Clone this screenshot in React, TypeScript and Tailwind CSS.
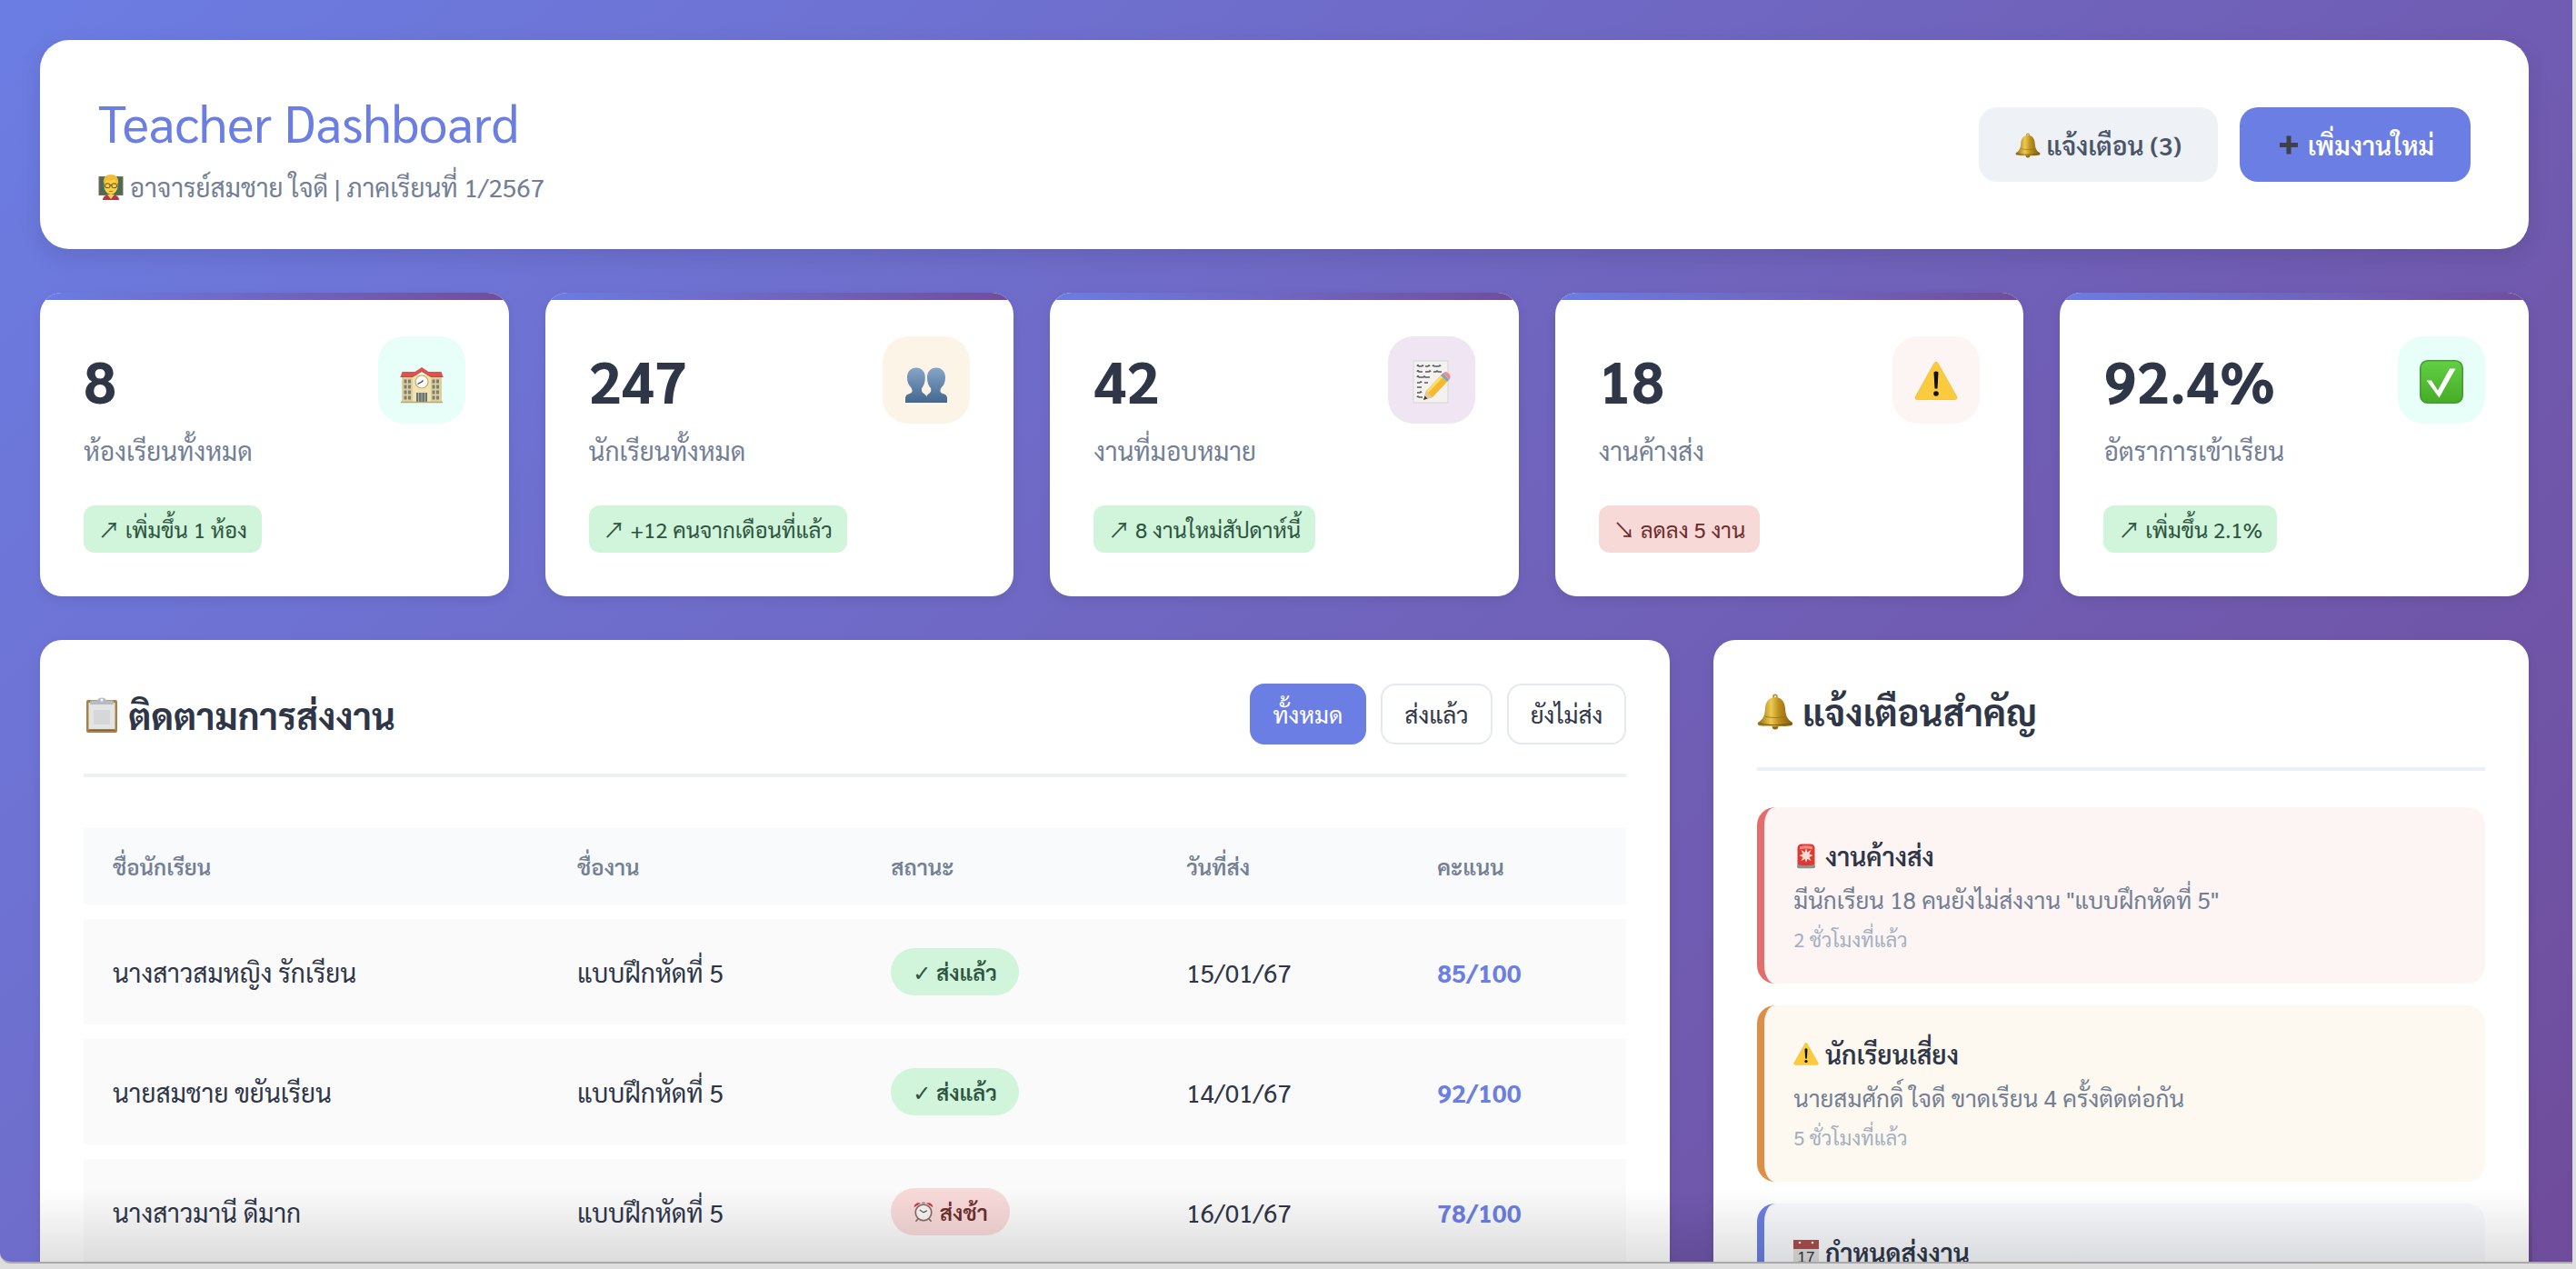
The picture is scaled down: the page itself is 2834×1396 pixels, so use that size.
import { useState, type ReactNode } from "react";

type Tone = "up" | "down";

interface IconProps {
  className?: string;
}

interface Stat {
  value: string;
  label: string;
  trend: string;
  tone: Tone;
  iconBg: string;
  icon: ReactNode;
}

interface Submission {
  student: string;
  task: string;
  late: boolean;
  date: string;
  score: string;
}

interface Alert {
  title: string;
  text: string;
  time: string;
  style: string;
  icon: ReactNode;
}

const inlineIcon = "inline-block size-[1em] align-[-0.1em]";
const bigIcon = "size-12";

function TeacherIcon({ className }: IconProps) {
  return (
    <svg viewBox="0 0 28 28" className={className} aria-hidden="true">
      <rect x="0.5" y="2" width="27" height="21" fill="#8a6a45" />
      <rect x="1.5" y="3" width="25" height="19" fill="#4a6b58" />
      <path d="M5 28c0-4 4-6 9-6s9 2 9 6z" fill="#b5364f" />
      <path d="M10 22l4 5 4-5z" fill="#f7d24b" />
      <ellipse cx="14" cy="12" rx="7.6" ry="10" fill="#fbd03f" />
      <path d="M6 10c-1-7 3-10 8-10s9 3 8 10c-2-1-3-3-4-5-3 2-8 2-10 1-1 1-1 3-2 4z" fill="#f1bd38" />
      <g fill="none" stroke="#5b4526" strokeWidth="1">
        <rect x="7.6" y="10" width="5.4" height="4.6" rx="1.6" />
        <rect x="15" y="10" width="5.4" height="4.6" rx="1.6" />
        <path d="M13 11.5h2" />
      </g>
      <path d="M11.4 18.2q2.6 1.8 5.2 0z" fill="#b8472f" />
    </svg>
  );
}

function BellIcon({ className }: IconProps) {
  return (
    <svg viewBox="0 0 40 40" className={className} aria-hidden="true">
      <defs>
        <linearGradient id="bell" x1="0" x2="1">
          <stop offset="0" stopColor="#8f6a10" />
          <stop offset="0.38" stopColor="#eccb52" />
          <stop offset="0.6" stopColor="#bd8f1c" />
          <stop offset="1" stopColor="#7d5b12" />
        </linearGradient>
      </defs>
      <circle cx="20" cy="3.4" r="2" fill="none" stroke="#b98b1e" strokeWidth="1.6" />
      <circle cx="20" cy="36" r="3.4" fill="#8d6315" />
      <path
        d="M20 4c-7.5 0-10.5 6-11 12-.5 8-2 12-7.5 15.5-1 .8-1 3 .5 3.500 5 1.600 31 1.600 36 0 1.500-.5 1.500-2.700.5-3.500-5.500-3.500-7-7.500-7.500-15.500-.5-6-3.500-12-11-12z"
        fill="url(#bell)"
      />
      <path d="M3 33c8 2 26 2 34 0" fill="none" stroke="#7c570d" strokeWidth="1.2" />
      <path d="M8.5 25c7 2 16 2 23 0" fill="none" stroke="#96700f" strokeWidth="0.8" />
    </svg>
  );
}

function PlusIcon({ className }: IconProps) {
  return (
    <svg viewBox="0 0 28 28" className={className} aria-hidden="true">
      <path d="M14 3.5v20M4 13.5h20" stroke="#3e4149" strokeWidth="5" />
    </svg>
  );
}

function SchoolIcon({ className }: IconProps) {
  const windows = [4.5, 9, 35.5, 40];
  const floors = [21.5, 27.5, 33.5, 39.5];
  return (
    <svg viewBox="0 0 48 48" className={className} aria-hidden="true">
      <path d="M2 18h44v29H2z" fill="#dccf9c" />
      <path d="M14 16h20v31H14z" fill="#efe3b4" />
      <path d="M2.5 13h14L24 8l7.5 5h14l2 5.5H34l-10-6-10 6H.5z" fill="#e0524c" />
      <path d="M.5 18.5H14l10-6 10 6h13.5" fill="none" stroke="#b73a38" strokeWidth="0.8" />
      {floors.map((y) =>
        windows.map((x) => <rect key={`${x}-${y}`} x={x} y={y} width="3" height="4" fill="#7d7e78" />)
      )}
      <circle cx="24" cy="24" r="7" fill="#fff" stroke="#c9a95a" strokeWidth="1.2" />
      <path d="M24 24l-4.5 2.500M24 24l1.500-1.500" stroke="#33386e" strokeWidth="1.3" />
      <path d="M18 36h12v11H18z" fill="#6c7470" />
      <path d="M24 36v11M20.5 36v11M27.5 36v11" stroke="#c8c8b8" strokeWidth="0.8" />
      <path d="M1 46.5h46" stroke="#b9a970" strokeWidth="1.4" />
    </svg>
  );
}

function PeopleIcon({ className }: IconProps) {
  return (
    <svg viewBox="0 0 48 48" className={className} aria-hidden="true">
      <defs>
        <linearGradient id="people" x1="0" x2="0" y1="0" y2="1">
          <stop offset="0" stopColor="#86a5c8" />
          <stop offset="1" stopColor="#44678f" />
        </linearGradient>
      </defs>
      <g fill="url(#people)">
        <path d="M13 8.5c5.800 0 9.800 4 9.800 11 0 5-1.600 9-3.600 11.500-.7 2.500.2 4.500 1.600 5.500 2.200 1.500 3.700 2.500 3.700 5v5.500H1V42c0-3 2-4.200 6-5.500 2-1 2-3.500.5-6C4.500 28 3 24 3 19.500c0-7 4-11 10-11z" />
        <path d="M35 8.500c6 0 10 4 10 11 0 4.500-1.500 8.500-4.500 11-1.500 2.500-1.500 5 .5 6 4 1.300 6 2.500 6 5.500v5H24V42c0-3 1.500-4 3.700-5.500 1.400-1 2-3 1.300-5.500-2.500-2.500-4-6.500-4-11.500 0-7 4-11 10-11z" />
      </g>
    </svg>
  );
}

function MemoIcon({ className }: IconProps) {
  return (
    <svg viewBox="0 0 48 48" className={className} aria-hidden="true">
      <path d="M4 1h38v46H4z" fill="#f3f2f0" stroke="#d8d5d2" strokeWidth="1" />
      <path
        d="M8 7q1-3 2 0h3q1-2 2 0M17 7h3q1-2 2 0M25 7q1-2 2 0h5q1-2 2 0M8 13q1-3 2 0h4M17 13h4q1-2 2 0M26 13h3q1-2 2 0h4M8 19q1-3 2 0h5q1-2 2 0h5M8 25h3q1-2 2 0M16 25h4M8 30h5M8 36h3q1-2 2 0M8 41q1-2 2 0h4"
        fill="none"
        stroke="#5b5a60"
        strokeWidth="1.4"
      />
      <path d="M15 44l3-10L34 17l7 7-16 17z" fill="#f4b92d" />
      <path d="M18 34L34 17l2.3 2.300-16 17z" fill="#fbdc6c" />
      <path d="M15 44l3-10 7 7z" fill="#e5c898" />
      <path d="M15 44l1.5-4.500 3 3z" fill="#3d3a38" />
      <path d="M34 17l2.5-2.500 7 7L41 24z" fill="#7fa5b4" />
      <path d="M36.5 14.500c2-2 4-2 6 0s3 4 1 7z" fill="#ee8e94" />
    </svg>
  );
}

function WarningIcon({ className }: IconProps) {
  return (
    <svg viewBox="0 0 48 48" className={className} aria-hidden="true">
      <path
        d="M22 3.5q2-3 4 0L46.5 40q1.800 3.500-2.500 3.500H4q-4.300 0-2.500-3.500z"
        fill="#fbcb3f"
        stroke="#f0bb38"
        strokeWidth="0.8"
      />
      <path d="M21.5 13.5q2.500-2 5 0L25.500 31.500h-3z" fill="#111" />
      <circle cx="24" cy="37" r="2.8" fill="#111" />
    </svg>
  );
}

function CheckIcon({ className }: IconProps) {
  return (
    <svg viewBox="0 0 48 48" className={className} aria-hidden="true">
      <defs>
        <linearGradient id="check" x1="0" x2="0" y1="0" y2="1">
          <stop offset="0" stopColor="#62cf45" />
          <stop offset="1" stopColor="#46ac25" />
        </linearGradient>
      </defs>
      <rect x="0.8" y="0.8" width="46.4" height="46.4" rx="8" fill="url(#check)" stroke="#479a37" strokeWidth="1.6" />
      <path d="M7.5 22.500h5.500l7 11L33 9.500h6.500L21.500 41.500z" fill="#fff" />
    </svg>
  );
}

function ClipboardIcon({ className }: IconProps) {
  return (
    <svg viewBox="0 0 40 40" className={className} aria-hidden="true">
      <rect x="3" y="3" width="34" height="36" rx="2" fill="#a98148" />
      <path d="M5.5 6h29v30h-29z" fill="#e4e4e5" />
      <path d="M11 14h18v16H11z" fill="#d6d7d9" />
      <path d="M5.5 36h29" stroke="#7b5a2c" strokeWidth="1.5" />
      <path d="M7 5.5q0-2 2-2h6q1-3 5-3t5 3h6q2 0 2 2V8H7z" fill="#b4bcc2" />
      <circle cx="20" cy="3" r="1.5" fill="#fff" />
    </svg>
  );
}

function SirenIcon({ className }: IconProps) {
  return (
    <svg viewBox="0 0 28 28" className={className} aria-hidden="true">
      <rect x="4" y="22.5" width="20" height="4.8" rx="2" fill="#8f9490" />
      <path d="M4.5 23V5q0-4.500 5-4.500h9q5 0 5 4.500v18q-9.500 2.500-19 0z" fill="#dc3b34" />
      <path d="M7 3.5q7-2.500 14 0v3q-7-2-14 0z" fill="#f18a80" />
      <path d="M14 5l1.3 4.500L19.500 7l-2 4.500 4 1.500-4 2 2 4-4.200-2L14 21l-1.300-4-4.200 2 2-4-4-2 4-1.500-2-4.500 4.200 2.500z" fill="#ffd9d4" />
    </svg>
  );
}

function ClockIcon({ className }: IconProps) {
  return (
    <svg viewBox="0 0 28 28" className={className} aria-hidden="true">
      <path d="M7 23l-3 3.5M21 23l3 3.5" stroke="#777" strokeWidth="2" />
      <path d="M2 8.5C2 4 6 1.5 10.5 3zM26 8.5C26 4 22 1.5 17.5 3z" fill="#c63a37" />
      <path d="M12 2.5h4" stroke="#888" strokeWidth="1.5" />
      <circle cx="14" cy="15" r="10.3" fill="#f6f4f2" stroke="#8c6a68" strokeWidth="2" />
      <path d="M14 15l-5-3.5M14 15l4.5-2.5" stroke="#444" strokeWidth="1.3" />
    </svg>
  );
}

function CalendarIcon({ className }: IconProps) {
  return (
    <svg viewBox="0 0 28 28" className={className} aria-hidden="true">
      <path d="M0 0h28v28H0z" fill="#dedede" />
      <path d="M0 0h28v10H0z" fill="#a94f4c" />
      <circle cx="7" cy="3" r="1.3" fill="#eee" />
      <circle cx="21" cy="3" r="1.3" fill="#eee" />
      <text x="14" y="25" fontSize="17" textAnchor="middle" fill="#333" className="font-['Liberation_Sans',sans-serif] font-normal">
        17
      </text>
    </svg>
  );
}

const stats: Stat[] = [
  { value: "8", label: "ห้องเรียนทั้งหมด", trend: "เพิ่มขึ้น 1 ห้อง", tone: "up", iconBg: "bg-[#e8fef9]", icon: <SchoolIcon className={bigIcon} /> },
  { value: "247", label: "นักเรียนทั้งหมด", trend: "+12 คนจากเดือนที่แล้ว", tone: "up", iconBg: "bg-[#fdf4e8]", icon: <PeopleIcon className={bigIcon} /> },
  { value: "42", label: "งานที่มอบหมาย", trend: "8 งานใหม่สัปดาห์นี้", tone: "up", iconBg: "bg-[#f0e5f3]", icon: <MemoIcon className={bigIcon} /> },
  { value: "18", label: "งานค้างส่ง", trend: "ลดลง 5 งาน", tone: "down", iconBg: "bg-[#fdf5f4]", icon: <WarningIcon className={bigIcon} /> },
  { value: "92.4%", label: "อัตราการเข้าเรียน", trend: "เพิ่มขึ้น 2.1%", tone: "up", iconBg: "bg-[#e8fef9]", icon: <CheckIcon className={bigIcon} /> },
];

const submissions: Submission[] = [
  { student: "นางสาวสมหญิง รักเรียน", task: "แบบฝึกหัดที่ 5", late: false, date: "15/01/67", score: "85/100" },
  { student: "นายสมชาย ขยันเรียน", task: "แบบฝึกหัดที่ 5", late: false, date: "14/01/67", score: "92/100" },
  { student: "นางสาวมานี ดีมาก", task: "แบบฝึกหัดที่ 5", late: true, date: "16/01/67", score: "78/100" },
];

const alerts: Alert[] = [
  {
    title: "งานค้างส่ง",
    text: 'มีนักเรียน 18 คนยังไม่ส่งงาน "แบบฝึกหัดที่ 5"',
    time: "2 ชั่วโมงที่แล้ว",
    style: "border-[#e46c6b] bg-[#fdf5f4]",
    icon: <SirenIcon className={inlineIcon} />,
  },
  {
    title: "นักเรียนเสี่ยง",
    text: "นายสมศักดิ์ ใจดี ขาดเรียน 4 ครั้งติดต่อกัน",
    time: "5 ชั่วโมงที่แล้ว",
    style: "border-[#de8e47] bg-[#fef9f0]",
    icon: <WarningIcon className={inlineIcon} />,
  },
  {
    title: "กำหนดส่งงาน",
    text: "",
    time: "",
    style: "border-[#6b7ee3] bg-[#f7f9fc]",
    icon: <CalendarIcon className={inlineIcon} />,
  },
];

const filters = ["ทั้งหมด", "ส่งแล้ว", "ยังไม่ส่ง"];

const columns = [
  { label: "ชื่อนักเรียน", width: "w-[511px]" },
  { label: "ชื่องาน", width: "w-[345px]" },
  { label: "สถานะ", width: "w-[325px]" },
  { label: "วันที่ส่ง", width: "w-[276px]" },
  { label: "คะแนน", width: "w-[240px]" },
];

const toneStyle: Record<Tone, string> = {
  up: "bg-[#d0f5db] text-[#2d5440]",
  down: "bg-[#f7d9d8] text-[#6d2d2d]",
};

function StatCard({ stat }: { stat: Stat }) {
  return (
    <article className="relative overflow-hidden rounded-3xl bg-white p-12 shadow-[0_4px_12px_rgba(0,0,0,0.07)]">
      <div className="absolute inset-x-0 top-0 h-2 bg-linear-to-r from-[#6a7de3] to-[#704d9c]" />
      <div className="flex items-start justify-between">
        <div>
          <p className="text-[64px] leading-[96px] font-bold text-[#2e3648]">{stat.value}</p>
          <p className="mt-2 text-[28px] leading-[42px] text-[#737f95]">{stat.label}</p>
        </div>
        <div className={`flex size-24 items-center justify-center rounded-[28px] pt-1 ${stat.iconBg}`}>{stat.icon}</div>
      </div>
      <p className={`mt-10 inline-block rounded-xl px-4 py-2 text-2xl leading-9 ${toneStyle[stat.tone]}`}>
        {stat.tone === "up" ? "↗" : "↘"} {stat.trend}
      </p>
    </article>
  );
}

function StatusPill({ late }: { late: boolean }) {
  return (
    <span
      className={`inline-block rounded-full px-6 py-2 align-top text-2xl leading-9 font-semibold ${late ? toneStyle.down : toneStyle.up}`}
    >
      {late ? (
        <ClockIcon className={inlineIcon} />
      ) : (
        <span className="font-['DejaVu_Sans',sans-serif] leading-none font-bold">✓</span>
      )}{" "}
      {late ? "ส่งช้า" : "ส่งแล้ว"}
    </span>
  );
}

export default function App() {
  const [filter, setFilter] = useState(filters[0]);

  return (
    <div className="h-screen overflow-hidden bg-[#dedede] pr-1 pb-1.5 font-[Sarabun,'Noto_Sans_CJK_JP',sans-serif] text-[#2e3648]">
      <div className="relative h-full overflow-hidden rounded-bl-xl border-b-2 border-[#a9a9a9] bg-linear-135 from-[#6b7de3] to-[#6f4c9b] py-11 pr-12 pl-11">
        <header className="flex items-center justify-between rounded-4xl bg-white px-16 py-12 shadow-[0_8px_24px_rgba(0,0,0,0.1)]">
          <div>
            <h1 className="text-[56px] leading-[84px] text-[#6b7ee3]">Teacher Dashboard</h1>
            <p className="mt-2 text-[28px] leading-[42px] text-[#737f95]">
              <TeacherIcon className={inlineIcon} /> อาจารย์สมชาย ใจดี | ภาคเรียนที่ 1/2567
            </p>
          </div>
          <div className="flex gap-6 text-[28px] leading-[34px] font-semibold">
            <button className="rounded-[20px] bg-[#eef2f7] px-10 py-6 text-[#4b5567]">
              <BellIcon className={inlineIcon} /> แจ้งเตือน (3)
            </button>
            <button className="rounded-[20px] bg-[#6b7ee3] px-10 py-6 text-white">
              <PlusIcon className={inlineIcon} /> เพิ่มงานใหม่
            </button>
          </div>
        </header>

        <section className="mt-12 grid grid-cols-5 gap-10">
          {stats.map((s) => (
            <StatCard key={s.value} stat={s} />
          ))}
        </section>

        <div className="mt-12 grid grid-cols-[2fr_1fr] gap-12">
          <section className="rounded-3xl bg-white p-12 shadow-[0_4px_12px_rgba(0,0,0,0.07)]">
            <div className="flex items-center justify-between border-b-4 border-[#edf1f4] pb-8">
              <h2 className="text-[40px] leading-[60px] font-bold">
                <ClipboardIcon className={inlineIcon} /> ติดตามการส่งงาน
              </h2>
              <div className="flex gap-4">
                {filters.map((f) => (
                  <button
                    key={f}
                    onClick={() => setFilter(f)}
                    className={`rounded-2xl border-2 px-6 py-3.5 text-[26px] leading-[35px] ${
                      filter === f ? "border-[#6b7ee3] bg-[#6b7ee3] text-white" : "border-[#e4e8ef] bg-white"
                    }`}
                  >
                    {f}
                  </button>
                ))}
              </div>
            </div>

            <table className="mt-10 w-full border-separate border-spacing-x-0 border-spacing-y-4 text-left">
              <thead>
                <tr className="bg-[#f8fafc] text-2xl leading-9 text-[#737f95]">
                  {columns.map((c) => (
                    <th key={c.label} className={`px-8 py-6 font-semibold ${c.width}`}>
                      {c.label}
                    </th>
                  ))}
                </tr>
              </thead>
              <tbody>
                {submissions.map((s) => (
                  <tr key={s.student} className="bg-[#fafafa] text-[28px] leading-[42px]">
                    <td className="p-8">{s.student}</td>
                    <td className="p-8">{s.task}</td>
                    <td className="p-8">
                      <StatusPill late={s.late} />
                    </td>
                    <td className="p-8">{s.date}</td>
                    <td className="p-8 font-bold text-[#6b7ee3]">{s.score}</td>
                  </tr>
                ))}
              </tbody>
            </table>
          </section>

          <section className="rounded-3xl bg-white p-12 shadow-[0_4px_12px_rgba(0,0,0,0.07)]">
            <h2 className="border-b-4 border-[#ecf1f8] pb-8 text-[40px] leading-[60px] font-bold">
              <BellIcon className={inlineIcon} /> แจ้งเตือนสำคัญ
            </h2>
            <div className="mt-10 flex flex-col gap-6">
              {alerts.map((a) => (
                <article key={a.title} className={`rounded-[20px] border-l-8 p-8 ${a.style}`}>
                  <h3 className="text-[28px] leading-[42px] font-semibold">
                    {a.icon} {a.title}
                  </h3>
                  <p className="mt-2 text-[26px] leading-[39px] text-[#737f95]">{a.text}</p>
                  <p className="mt-2 text-[22px] leading-[33px] text-[#a3afc1]">{a.time}</p>
                </article>
              ))}
            </div>
          </section>
        </div>

        {/* shade that the window casts along its lower edge */}
        <div className="pointer-events-none absolute inset-x-11 bottom-0 h-20 bg-linear-to-b from-transparent to-black/12" />
      </div>
    </div>
  );
}
